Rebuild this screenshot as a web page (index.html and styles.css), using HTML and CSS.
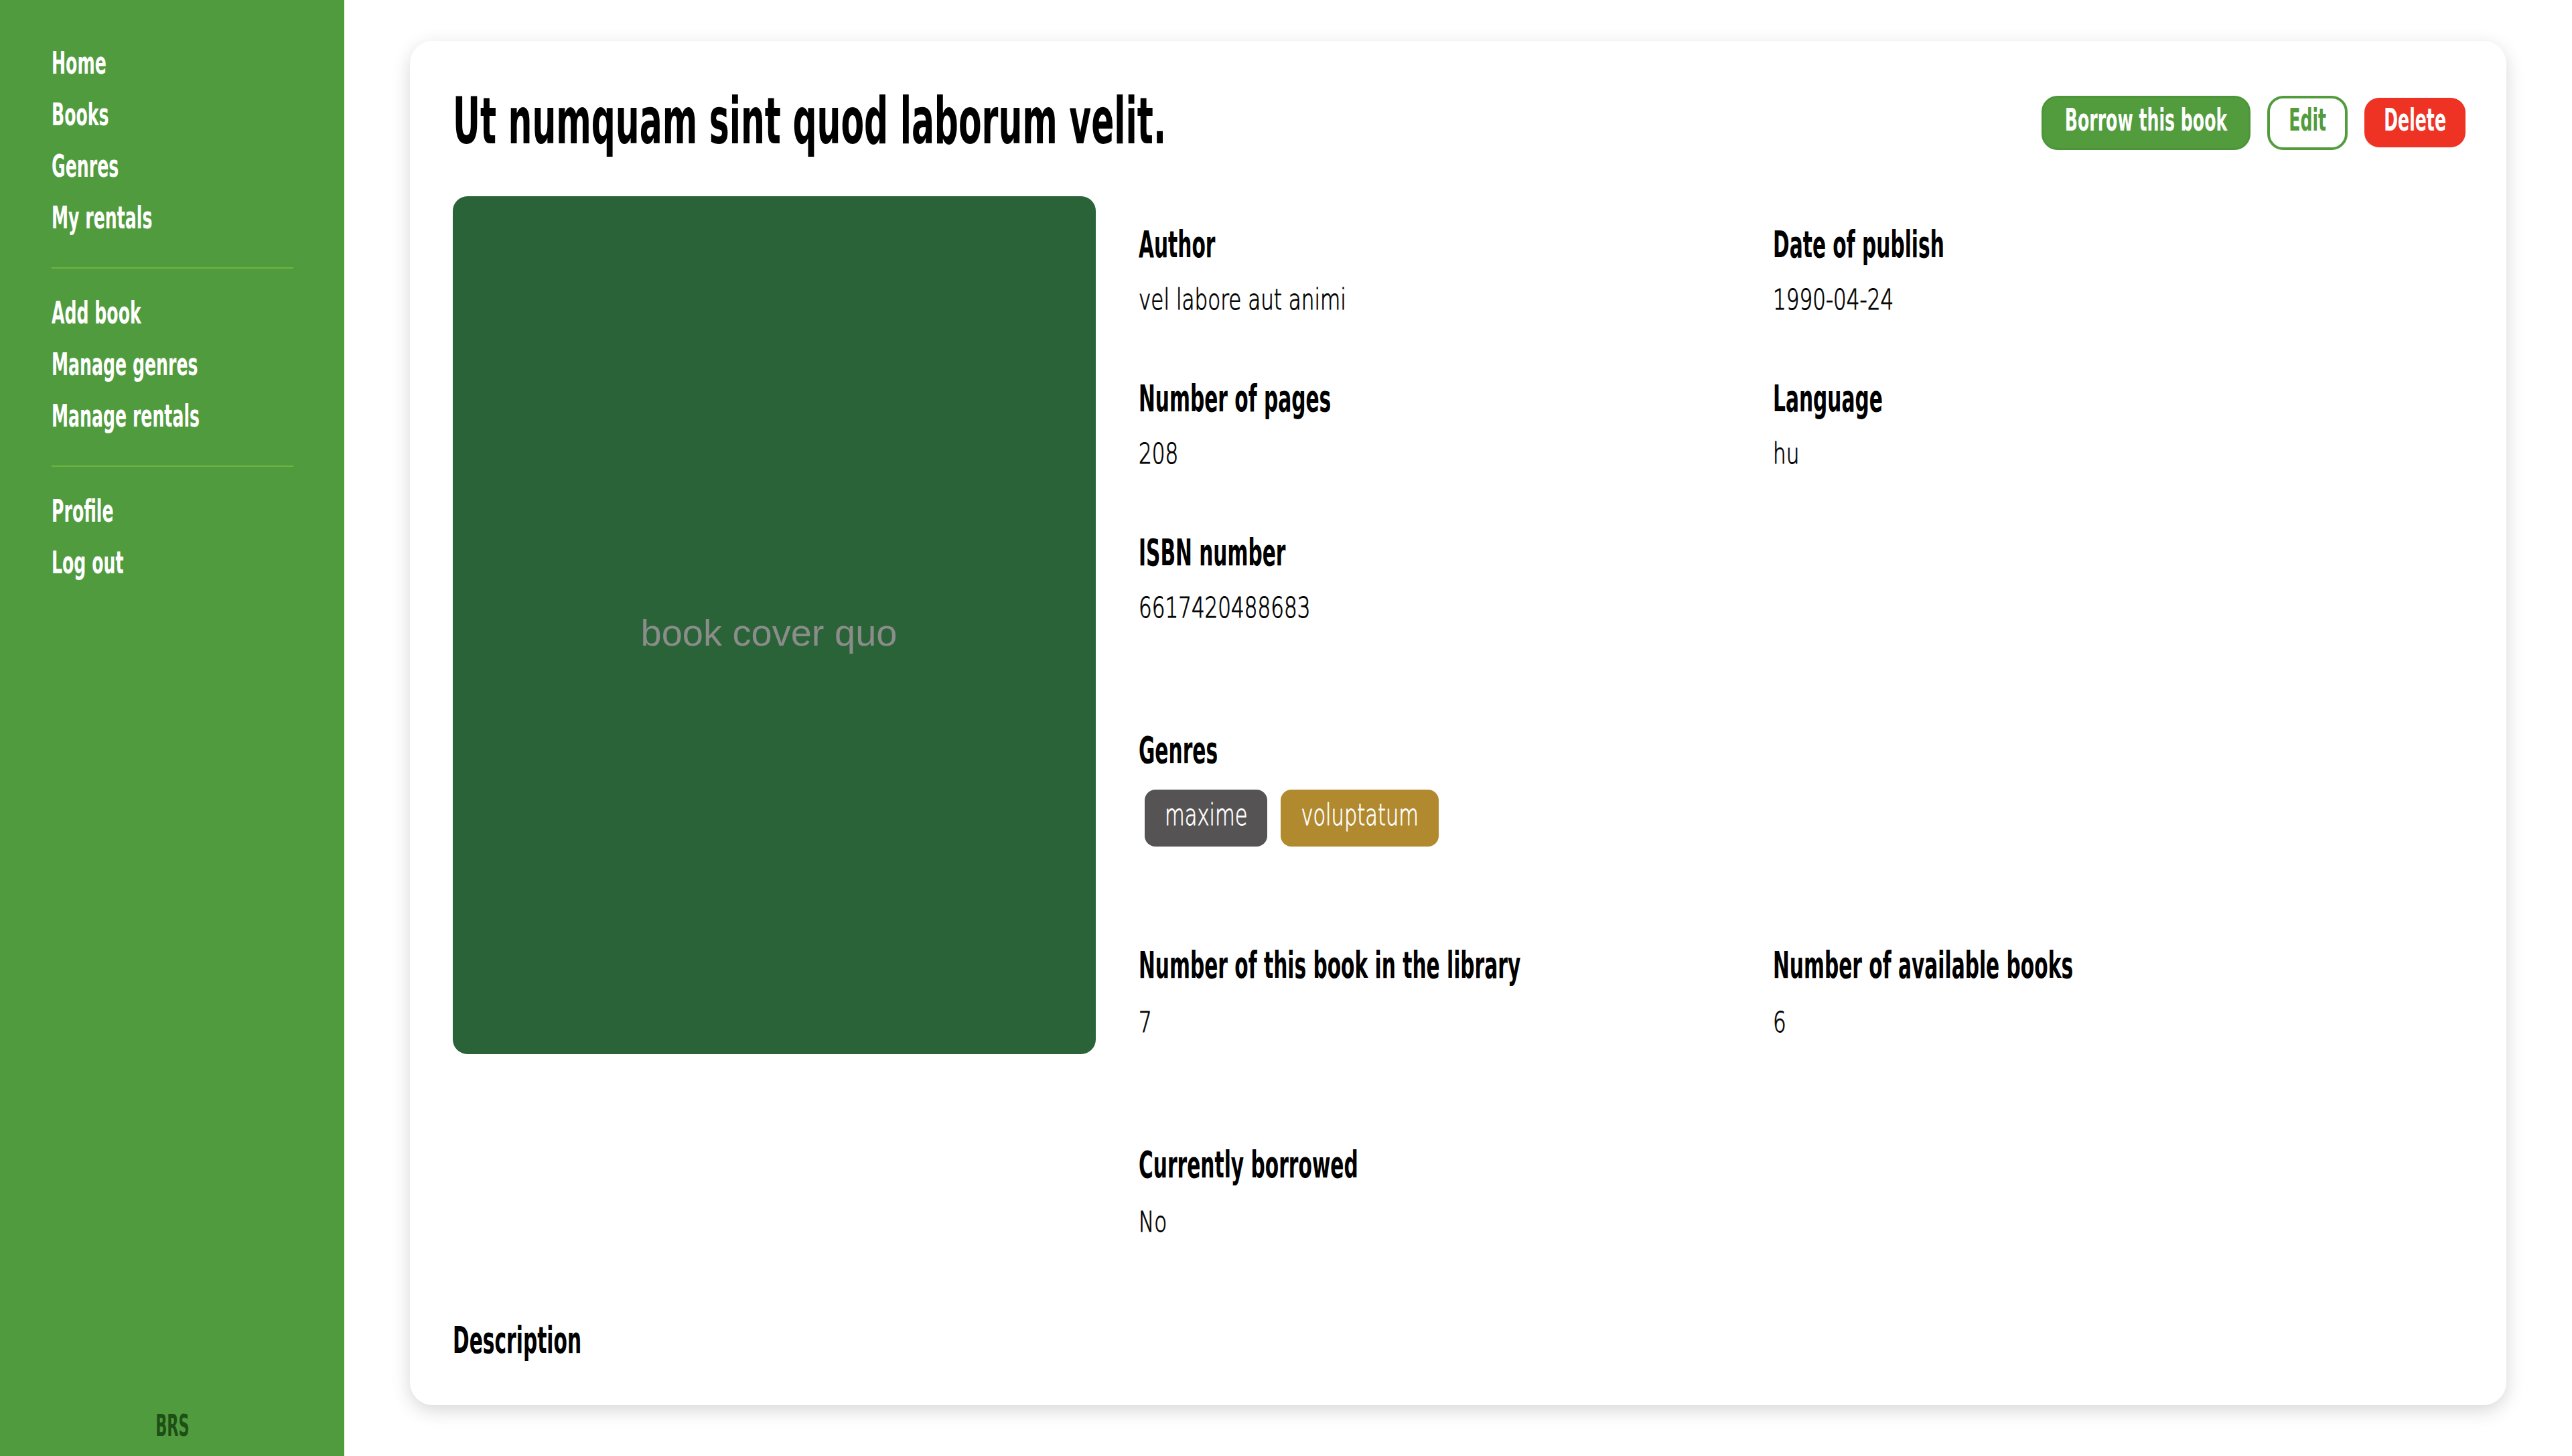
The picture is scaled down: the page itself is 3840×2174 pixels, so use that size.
FILE: index.html
```html
<!DOCTYPE html>
<html lang="en">
<head>
<meta charset="utf-8">
<title>Ut numquam sint quod laborum velit.</title>
<link rel="stylesheet" href="styles.css">
</head>
<body>
<aside class="sidebar">
  <nav class="nav-group">
    <a class="nav-link" href="#">Home</a>
    <a class="nav-link" href="#">Books</a>
    <a class="nav-link" href="#">Genres</a>
    <a class="nav-link" href="#">My rentals</a>
  </nav>
  <hr class="divider">
  <nav class="nav-group">
    <a class="nav-link" href="#">Add book</a>
    <a class="nav-link" href="#">Manage genres</a>
    <a class="nav-link" href="#">Manage rentals</a>
  </nav>
  <hr class="divider">
  <nav class="nav-group">
    <a class="nav-link" href="#">Profile</a>
    <a class="nav-link" href="#">Log out</a>
  </nav>
  <div class="brand">BRS</div>
</aside>
<main class="main">
  <article class="card">
    <header class="card-head">
      <h1 class="title">Ut numquam sint quod laborum velit.</h1>
      <div class="actions">
        <a class="btn btn-borrow" href="#"><span class="btn-text">Borrow this book</span></a>
        <a class="btn btn-edit" href="#"><span class="btn-text">Edit</span></a>
        <a class="btn btn-delete" href="#"><span class="btn-text">Delete</span></a>
      </div>
    </header>
    <div class="card-body">
      <div class="cover"><span class="cover-text">book cover quo</span></div>
      <div class="info">
        <div class="fields">
          <div class="field"><h3 class="label">Author</h3><p class="value">vel labore aut animi</p></div>
          <div class="field"><h3 class="label">Date of publish</h3><p class="value">1990-04-24</p></div>
          <div class="field"><h3 class="label">Number of pages</h3><p class="value">208</p></div>
          <div class="field"><h3 class="label">Language</h3><p class="value">hu</p></div>
          <div class="field"><h3 class="label">ISBN number</h3><p class="value">6617420488683</p></div>
        </div>
        <section class="genres">
          <h3 class="label">Genres</h3>
          <div class="badges">
            <span class="badge badge-grey"><span class="badge-text">maxime</span></span>
            <span class="badge badge-gold"><span class="badge-text">voluptatum</span></span>
          </div>
        </section>
        <div class="fields fields-stock">
          <div class="field"><h3 class="label">Number of this book in the library</h3><p class="value">7</p></div>
          <div class="field"><h3 class="label">Number of available books</h3><p class="value">6</p></div>
        </div>
        <div class="fields fields-status">
          <div class="field"><h3 class="label">Currently borrowed</h3><p class="value">No</p></div>
        </div>
      </div>
    </div>
    <h3 class="label description">Description</h3>
  </article>
</main>
</body>
</html>
```
FILE: styles.css
```css
* { box-sizing: border-box; }

html, body {
  margin: 0;
  padding: 0;
  background: #ffffff;
}

body {
  display: flex;
  min-height: 100vh;
  font-family: "DejaVu Sans Condensed", "DejaVu Sans", sans-serif;
  font-stretch: condensed;
  color: #000;
  overflow: hidden;
}

/* ---------- Sidebar ---------- */
.sidebar {
  flex: 0 0 514px;
  min-height: 100vh;
  background: #519b3f;
  display: flex;
  flex-direction: column;
  padding: 62px 76px 12px 77px;
}

.nav-group {
  display: flex;
  flex-direction: column;
}

.nav-link {
  display: block;
  color: #ffffff;
  text-decoration: none;
  font-weight: 700;
  font-size: 28px;
  line-height: 77px;
  white-space: nowrap;
  transform: scaleY(1.666);
  transform-origin: 0 calc(50% + 0.346em);
}

.divider {
  border: 0;
  height: 2px;
  background: #6db443;
  margin: 29px 0 34px;
}

.brand {
  margin-top: auto;
  text-align: center;
  color: #1d4f16;
  font-size: 25px;
  font-weight: 700;
  line-height: 50px;
  transform: scaleY(1.81);
  transform-origin: 50% calc(50% + 0.346em);
}

/* ---------- Main ---------- */
.main {
  flex: 1;
  min-width: 0;
  padding: 61px 98px 40px;
}

.card {
  background: #ffffff;
  border-radius: 34px;
  box-shadow: 0 8px 28px rgba(0, 0, 0, 0.16);
  padding: 62px 61px 64px 64px;
}

.card-head {
  display: flex;
  align-items: center;
  justify-content: space-between;
}

.title {
  margin: 0;
  padding-top: 24px;
  font-size: 56px;
  font-weight: 700;
  line-height: 96px;
  white-space: nowrap;
  transform: scaleY(1.715);
  transform-origin: 0 91.4px;
}

.actions {
  display: flex;
  align-items: center;
  gap: 25px;
}

.btn {
  display: flex;
  align-items: center;
  justify-content: center;
  height: 81px;
  border-radius: 24px;
  text-decoration: none;
  font-size: 28px;
  font-weight: 700;
  white-space: nowrap;
}

.btn-text {
  display: inline-block;
  line-height: 28px;
  padding-top: 5px;
  transform: scaleY(1.666);
  transform-origin: 50% 28.7px;
}

.btn-borrow {
  background: #529c3e;
  border: 3px solid #4c9539;
  color: #ffffff;
  padding: 0 32px;
}

.btn-edit {
  background: #ffffff;
  border: 4px solid #529c3e;
  color: #529c3e;
  padding: 0 28px;
}

.btn-delete {
  background: #ee3224;
  color: #ffffff;
  height: 74px;
  border-radius: 22px;
  padding: 0 29px;
}

/* ---------- Body ---------- */
.card-body {
  display: flex;
  align-items: flex-start;
  gap: 64px;
  margin-top: 50px;
}

.cover {
  flex: 0 0 960px;
  height: 1281px;
  background: #2b6339;
  border-radius: 22px;
  display: flex;
  align-items: center;
  justify-content: center;
}

.cover-text {
  font-family: "Liberation Sans", Arial, sans-serif;
  font-stretch: normal;
  font-size: 56px;
  color: #8a8d8a;
  margin: 22px 16px 0 0;
}

.info {
  flex: 1;
  min-width: 0;
  padding-top: 55px;
}

.fields {
  display: grid;
  grid-template-columns: 947px 1fr;
  row-gap: 105px;
}

.field {
  min-width: 0;
}

.label {
  margin: 0;
  font-size: 33px;
  font-weight: 700;
  line-height: 50px;
  white-space: nowrap;
  transform: scaleY(1.66);
  transform-origin: 0 calc(50% + 0.346em);
}

.value {
  margin: 31px 0 0;
  font-family: "DejaVu Sans", sans-serif;
  font-stretch: normal;
  font-size: 31px;
  font-weight: 200;
  line-height: 44px;
  white-space: nowrap;
  color: #000;
  -webkit-text-stroke: 0.7px #000;
  transform: scaleY(1.35);
  transform-origin: 0 calc(50% + 0.346em);
}

.genres {
  margin-top: 170px;
}

.badges {
  display: flex;
  gap: 20px;
  margin-top: 26px;
  padding-left: 9px;
}

.badge {
  display: flex;
  align-items: center;
  height: 85px;
  padding: 0 30px;
  border-radius: 16px;
  color: #ffffff;
  font-family: "DejaVu Sans", sans-serif;
  font-stretch: normal;
  font-weight: 200;
  font-size: 30.5px;
}

.badge-text {
  display: inline-block;
  line-height: 34px;
  -webkit-text-stroke: 0.6px #ffffff;
  transform: scaleY(1.45);
  transform-origin: 0 27.6px;
}

.badge-grey { background: #555353; }
.badge-gold { background: #b1892f; }

.fields-stock {
  margin-top: 160px;
}

.fields-stock .value,
.fields-status .value {
  margin-top: 34px;
}

.fields-status {
  margin-top: 170px;
}

.description {
  margin-top: 134px;
}
```
